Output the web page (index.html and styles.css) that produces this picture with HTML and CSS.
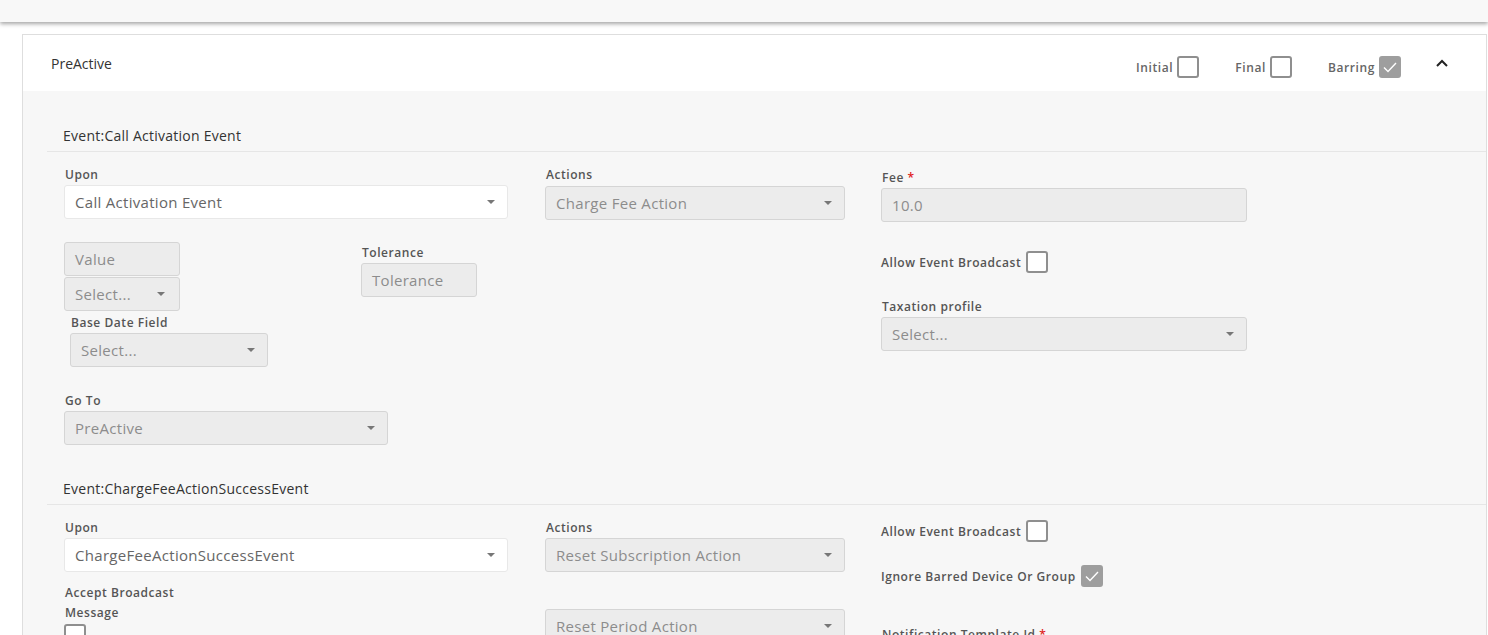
FILE: index.html
```html
<!DOCTYPE html>
<html>
<head>
<meta charset="utf-8">
<link rel="stylesheet" href="styles.css">
</head>
<body>
<div class="topbar"></div>
<div class="card">
  <div class="card-header">
    <div class="card-title">PreActive</div>
    <div class="header-flags">
      <label class="flag">Initial <span class="cb"></span></label>
      <label class="flag">Final <span class="cb"></span></label>
      <label class="flag">Barring <span class="cb checked"><svg viewBox="0 0 22 22" width="22" height="22"><path d="M5 11.5 L9 15.5 L17 7" fill="none" stroke="#fff" stroke-width="1.4"/></svg></span></label>
      <svg class="chev" viewBox="0 0 14 10" width="14" height="10"><path d="M2 8 L7 3 L12 8" fill="none" stroke="#222" stroke-width="2"/></svg>
    </div>
  </div>
  <div class="card-body">
    <section class="event">
      <div class="event-title">Event:Call Activation Event</div>
      <div class="event-grid">
        <div class="col col1">
          <div class="lbl">Upon</div>
          <div class="sel white w444"><span>Call Activation Event</span><i class="caret"></i></div>
          <div class="val-row">
            <div class="val-left">
              <div class="inp dis w116"><span>Value</span></div>
              <div class="sel dis w116 stack"><span>Select...</span><i class="caret"></i></div>
            </div>
            <div class="val-right">
              <div class="lbl">Tolerance</div>
              <div class="inp dis w116"><span>Tolerance</span></div>
            </div>
          </div>
          <div class="base-date">
            <div class="lbl">Base Date Field</div>
            <div class="sel dis w198"><span>Select...</span><i class="caret"></i></div>
          </div>
          <div class="goto">
            <div class="lbl">Go To</div>
            <div class="sel dis w324"><span>PreActive</span><i class="caret"></i></div>
          </div>
        </div>
        <div class="col col2">
          <div class="lbl">Actions</div>
          <div class="sel dis w300 act1"><span>Charge Fee Action</span><i class="caret"></i></div>
        </div>
        <div class="col col3">
          <div class="lbl fee-lbl">Fee <b class="req">*</b></div>
          <div class="inp dis w366"><span>10.0</span></div>
          <div class="chk-row aeb1">Allow Event Broadcast <span class="cb"></span></div>
          <div class="lbl tax-lbl">Taxation profile</div>
          <div class="sel dis w366"><span>Select...</span><i class="caret"></i></div>
        </div>
      </div>
    </section>
    <section class="event ev2">
      <div class="event-title">Event:ChargeFeeActionSuccessEvent</div>
      <div class="event-grid">
        <div class="col col1">
          <div class="lbl">Upon</div>
          <div class="sel white w444"><span>ChargeFeeActionSuccessEvent</span><i class="caret"></i></div>
          <div class="lbl wrap-lbl">Accept Broadcast Message</div>
          <span class="cb"></span>
        </div>
        <div class="col col2">
          <div class="lbl">Actions</div>
          <div class="sel dis w300"><span>Reset Subscription Action</span><i class="caret"></i></div>
          <div class="sel dis w300 act2"><span>Reset Period Action</span><i class="caret"></i></div>
        </div>
        <div class="col col3">
          <div class="chk-row">Allow Event Broadcast <span class="cb"></span></div>
          <div class="chk-row ibd">Ignore Barred Device Or Group <span class="cb checked"><svg viewBox="0 0 22 22" width="22" height="22"><path d="M5 11.5 L9 15.5 L17 7" fill="none" stroke="#fff" stroke-width="1.4"/></svg></span></div>
          <div class="lbl ntf-lbl">Notification Template Id <b class="req">*</b></div>
        </div>
      </div>
    </section>
  </div>
</div>
</body>
</html>
```

FILE: styles.css
```css
* { box-sizing: border-box; }
html, body { margin: 0; padding: 0; }
body {
  background: #fff;
  font-family: "Open Sans", "Noto Sans", sans-serif;
  color: #333;
  height: 635px;
  overflow: hidden;
}
.topbar {
  height: 22px;
  background: #f8f8f8;
  box-shadow: 0 2px 4px rgba(0,0,0,0.35);
  position: relative;
  z-index: 2;
}
.card {
  margin: 12px 1px 0 22px;
  border: 1px solid #dedede;
  background: #f7f7f7;
}
.card-header {
  height: 56px;
  background: #fff;
  display: flex;
  align-items: center;
  justify-content: space-between;
  padding: 0 37px 0 28px;
}
.card-title {
  font-size: 14px;
  color: #333;
}
.header-flags {
  display: flex;
  align-items: center;
  margin-top: 8px;
}
.flag {
  display: flex;
  align-items: center;
  font-size: 12px;
  font-weight: 600;
  color: #666;
  gap: 4px;
  margin-right: 36px;
  letter-spacing: 0.6px;
}
.cb {
  display: inline-block;
  width: 22px;
  height: 22px;
  border: 2px solid #8f8f8f;
  border-radius: 3px;
  background: #fff;
  flex: none;
  position: relative;
}
.cb.checked {
  background: #9e9e9e;
  border-color: #9e9e9e;
}
.cb.checked svg {
  position: absolute;
  left: -2px;
  top: -2px;
}
.chev { display: block; margin-top: -8px; margin-left: -2px; }

.card-body {
  padding: 35px 0 0 24px;
}
.event-title {
  font-size: 14px;
  line-height: 20px;
  color: #333;
  padding: 0 0 5px 16px;
  border-bottom: 1px solid #e6e6e6;
  letter-spacing: 0.25px;
}
.event-grid {
  display: flex;
  padding: 15px 0 0 17px;
}
.col { display: flex; flex-direction: column; align-items: flex-start; }
.col1 { width: 481px; }
.col2 { width: 336px; }
.col3 { flex: 1; }

.lbl {
  font-size: 12px;
  line-height: 16px;
  font-weight: 600;
  color: #555;
  margin-bottom: 2px;
  padding-left: 1px;
  letter-spacing: 0.55px;
}
.req { color: #e02020; font-weight: 600; }
.sel, .inp {
  height: 34px;
  border: 1px solid #d5d5d5;
  border-radius: 3px;
  display: flex;
  align-items: center;
  justify-content: space-between;
  padding: 0 12px 0 10px;
  font-size: 15px;
  color: #8c8c8c;
  flex: none;
  letter-spacing: 0.3px;
}
.sel.white {
  background: #fff;
  border-color: #e8e8e8;
  color: #666;
}
.dis { background: #ececec; }
.caret {
  width: 0; height: 0;
  border-left: 4px solid transparent;
  border-right: 4px solid transparent;
  border-top: 4px solid #777;
}
.w444 { width: 444px; }
.w116 { width: 116px; }
.w198 { width: 198px; }
.w300 { width: 300px; }
.w324 { width: 324px; }
.w366 { width: 366px; }
.stack { margin-top: 1px; padding-right: 14px; }

.val-row { display: flex; margin-top: 23px; }
.val-left { width: 297px; }
.val-right { margin-top: 3px; }
.base-date { margin-top: 4px; padding-left: 6px; }
.goto { margin-top: 26px; }
.act1 { margin-top: 1px; }
.fee-lbl { margin-top: 3px; }

.chk-row {
  display: flex;
  align-items: center;
  gap: 5px;
  font-size: 12px;
  font-weight: 600;
  color: #555;
  height: 22px;
  letter-spacing: 0.55px;
}
.aeb1 { margin-top: 29px; }
.tax-lbl { margin-top: 26px; }

.ev2 { margin-top: 34px; }
.wrap-lbl { width: 130px; line-height: 20px; margin-top: 11px; margin-bottom: 1px; }
.act2 { margin-top: 37px; }
.ibd { margin-top: 23px; }
.ntf-lbl { margin-top: 40px; }
```
